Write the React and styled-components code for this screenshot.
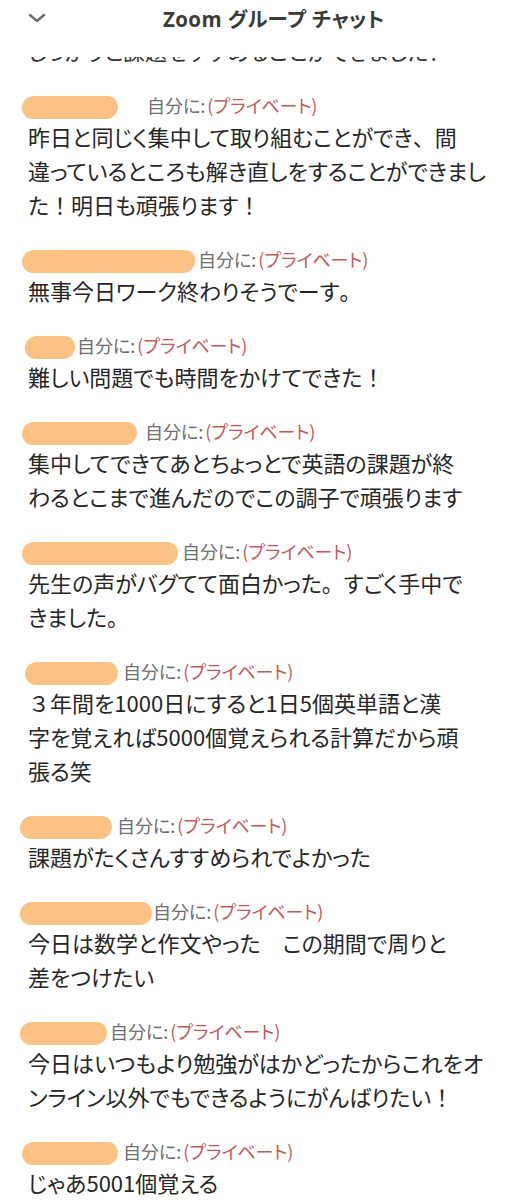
import styled, { createGlobalStyle } from "styled-components";

const GlobalStyle = createGlobalStyle`
  body {
    margin: 0;
    background: #ffffff;
    font-family: "Noto Sans CJK JP", "Noto Sans", sans-serif;
  }
`;

const messages = [
  { blob: 96, gap: 29, lines: ["昨日と同じく集中して取り組むことができ、間", "違っているところも解き直しをすることができまし", "た！明日も頑張ります！"] },
  { blob: 173, gap: 3, lines: ["無事今日ワーク終わりそうでーす。"] },
  { blob: 50, gap: 2, start: 25, lines: ["難しい問題でも時間をかけてできた！"] },
  { blob: 115, gap: 8, lines: ["集中してできてあとちょっとで英語の課題が終", "わるとこまで進んだのでこの調子で頑張ります"] },
  { blob: 156, gap: 4, lines: ["先生の声がバグてて面白かった。すごく手中で", "きました。"] },
  { blob: 93, gap: 5, start: 25, lines: ["３年間を1000日にすると1日5個英単語と漢", "字を覚えれば5000個覚えられる計算だから頑", "張る笑"] },
  { blob: 92, gap: 5, start: 20, lines: ["課題がたくさんすすめられでよかった"] },
  { blob: 132, gap: 1, start: 20, lines: ["今日は数学と作文やった　この期間で周りと", "差をつけたい"] },
  { blob: 87, gap: 3, start: 20, lines: ["今日はいつもより勉強がはかどったからこれをオ", "ンライン以外でもできるようにがんばりたい！"] },
  { blob: 96, gap: 5, lines: ["じゃあ5001個覚える"] },
];

// punctuation and full-width digits keep their full width, as in the screenshot
const WIDE = /([、。！３])/;

function renderLine(text) {
  return text.split(WIDE).map((part, i) =>
    WIDE.test(part) ? <Wide key={i}>{part}</Wide> : part
  );
}

function App() {
  return (
    <Page>
      <GlobalStyle />
      <TopBar>
        <Chevron width="18" height="12" viewBox="0 0 18 12">
          <path d="M2 3 L9 9 L16 3" fill="none" stroke="#6b6b73" strokeWidth="2.4" strokeLinecap="round" strokeLinejoin="round" />
        </Chevron>
        <Title>Zoom グループ チャット</Title>
      </TopBar>
      <Clip>
        <ClippedLine>しっかりと課題をすすめることができました！</ClippedLine>
      </Clip>
      <List>
        {messages.map((m, i) => (
          <Message key={i}>
            <Sender $start={m.start ?? 22}>
              <Blob $width={m.blob} $gap={m.gap} />
              <To>自分に:</To>
              <Private>(プライベート)</Private>
            </Sender>
            <Body>
              {m.lines.map((l, j) => (
                <Line key={j}>{renderLine(l)}</Line>
              ))}
            </Body>
          </Message>
        ))}
      </List>
    </Page>
  );
}

const Page = styled.div`
  width: 520px;
  min-height: 1200px;
  background: #ffffff;
  overflow: hidden;
`;

const TopBar = styled.div`
  display: flex;
  align-items: center;
  height: 36px;
  padding: 0 0 0 28px;
  margin-bottom: 21px;
`;

const Chevron = styled.svg`
  display: block;
`;

const Title = styled.div`
  margin-left: 117px;
  font-family: "Open Sans", "Noto Sans CJK JP", sans-serif;
  font-size: 20.5px;
  font-weight: 700;
  color: #3a3a3a;
  font-feature-settings: "palt";
  letter-spacing: 0.4px;
`;

const Clip = styled.div`
  height: 5px;
  overflow: hidden;
  padding-left: 28px;
`;

const ClippedLine = styled.div`
  margin-top: -24px;
  font-size: 22px;
  line-height: 34px;
  color: #333;
  white-space: nowrap;
  font-feature-settings: "palt";
`;

const List = styled.div`
  display: flex;
  flex-direction: column;
  gap: 24px;
  padding-top: 29px;
`;

const Message = styled.div`
  display: flex;
  flex-direction: column;
`;

const Sender = styled.div`
  display: flex;
  align-items: center;
  height: 28px;
  padding-left: ${(p) => p.$start}px;
  font-size: 18px;
  font-feature-settings: "palt";
  white-space: nowrap;
`;

const Blob = styled.span`
  display: inline-block;
  width: ${(p) => p.$width}px;
  height: 23px;
  margin-top: 4px;
  margin-right: ${(p) => p.$gap}px;
  background: #fbc283;
  border-radius: 12px 10px 12px 11px;
`;

const To = styled.span`
  color: #6e6e6e;
`;

const Private = styled.span`
  color: #c4585a;
  margin-left: 2px;
`;

const Body = styled.div`
  padding-left: 28px;
  font-size: 22px;
  line-height: 34px;
  color: #262626;
  font-feature-settings: "palt";
`;

const Line = styled.div`
  white-space: nowrap;
`;

const Wide = styled.span`
  font-feature-settings: normal;
`;

export default App;
